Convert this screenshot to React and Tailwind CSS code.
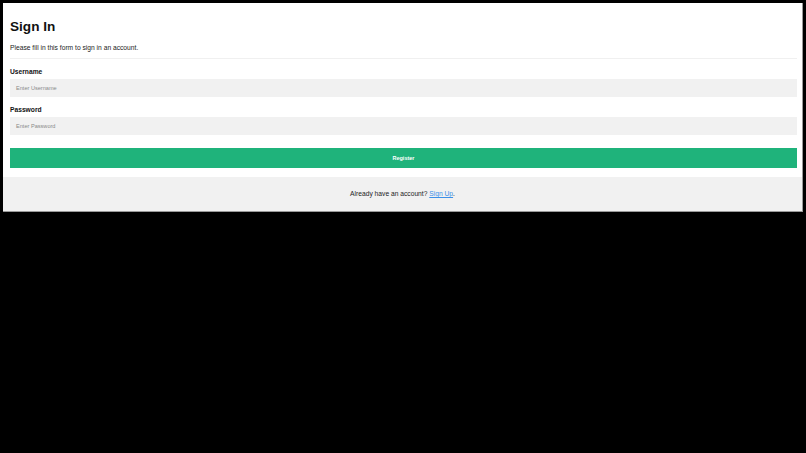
export default function App() {
  const font = { fontFamily: '"Liberation Sans", Arial, sans-serif' };
  return (
    <div className="min-h-screen w-full bg-black pt-[3px] pl-[3px]" style={font}>
      <div className="w-[800px] bg-white border-r border-b border-[#9a9a9a]">
        <div className="pl-[7px] pr-[5px] pt-[16px] pb-[9px]">
          <h1 className="text-[13.6px] leading-[16px] font-bold text-[#111]">Sign In</h1>
          <p className="mt-[9px] text-[6.7px] leading-[8px] text-[#222]">
            Please fill in this form to sign in an account.
          </p>
          <div className="mt-[6px] h-px bg-[#f0f0f0]" />
          <div className="mt-[9px] text-[6.7px] leading-[8px] font-bold text-[#111]">Username</div>
          <div className="mt-[3px] h-[18px] bg-[#f1f1f1] flex items-center px-[6px]">
            <span className="text-[5.6px] leading-[7px] text-[#8a8a8a]">Enter Username</span>
          </div>
          <div className="mt-[9px] text-[6.7px] leading-[8px] font-bold text-[#111]">Password</div>
          <div className="mt-[3px] h-[18px] bg-[#f1f1f1] flex items-center px-[6px]">
            <span className="text-[5.6px] leading-[7px] text-[#8a8a8a]">Enter Password</span>
          </div>
          <div className="mt-[13px] h-[20px] bg-[#1fb37b] flex items-center justify-center">
            <span className="text-[5.5px] leading-[7px] font-bold text-white">Register</span>
          </div>
        </div>
        <div className="h-[34px] bg-[#f1f1f1] flex items-center justify-center">
          <span className="text-[6.7px] leading-[8px] text-[#222]">
            Already have an account?{" "}
            <span className="text-[#3d8fe8] underline">Sign Up</span>.
          </span>
        </div>
      </div>
    </div>
  );
}
